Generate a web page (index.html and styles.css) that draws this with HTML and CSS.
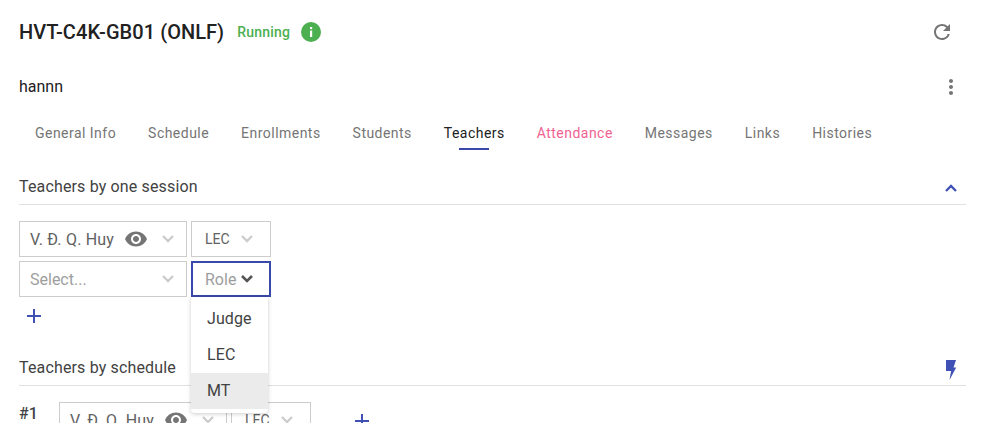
FILE: index.html

```html
<!DOCTYPE html>
<html lang="en">
<head>
    <meta charset="UTF-8">
    <meta name="viewport" content="width=device-width, initial-scale=1.0">
    <title>HVT-C4K-GB01 (ONLF)</title>
    <link rel="stylesheet" href="styles.css">
</head>
<body>
    <div class="page">
        <div class="title-row">
            <h1 class="title">HVT-C4K-GB01 (ONLF)</h1>
            <span class="status">Running</span>
            <span class="info-dot">
                <svg viewBox="0 0 20 20" width="20" height="20"><circle cx="10" cy="10" r="10" fill="#4caf50"/><rect x="9" y="5" width="2.2" height="2.2" fill="#fff"/><rect x="9" y="8.6" width="2.2" height="6.4" fill="#fff"/></svg>
            </span>
            <svg class="refresh" viewBox="0 0 24 24" width="24" height="24"><path fill="#757575" d="M17.65 6.35A7.958 7.958 0 0 0 12 4c-4.42 0-7.99 3.58-7.99 8s3.57 8 7.99 8c3.73 0 6.84-2.55 7.73-6h-2.08A5.99 5.99 0 0 1 12 18c-3.31 0-6-2.69-6-6s2.69-6 6-6c1.66 0 3.14.69 4.22 1.78L13 11h7V4l-2.35 2.35z"/></svg>
        </div>

        <div class="owner-row">
            <span class="owner">hannn</span>
            <svg class="more" viewBox="0 0 24 24" width="24" height="24"><path fill="#757575" d="M12 8c1.1 0 2-.9 2-2s-.9-2-2-2-2 .9-2 2 .9 2 2 2zm0 2c-1.1 0-2 .9-2 2s.9 2 2 2 2-.9 2-2-.9-2-2-2zm0 6c-1.1 0-2 .9-2 2s.9 2 2 2 2-.9 2-2-.9-2-2-2z"/></svg>
        </div>

        <div class="tabs">
            <a class="tab">General Info</a>
            <a class="tab">Schedule</a>
            <a class="tab">Enrollments</a>
            <a class="tab">Students</a>
            <a class="tab active">Teachers</a>
            <a class="tab pink">Attendance</a>
            <a class="tab">Messages</a>
            <a class="tab">Links</a>
            <a class="tab">Histories</a>
        </div>

        <div class="section-head first">
            <span>Teachers by one session</span>
            <svg class="collapse" viewBox="0 0 14 10" width="14" height="10"><path fill="none" stroke="#3f51b5" stroke-width="2.3" d="M2 8l5-5 5 5"/></svg>
        </div>

        <div class="select-rows">
            <div class="select-row">
                <div class="select teacher">
                    <span class="value">V. Đ. Q. Huy</span>
                    <svg class="eye" viewBox="0 0 24 24" width="24" height="24"><path fill="#757575" d="M12 4.5C7 4.5 2.73 7.61 1 12c1.73 4.39 6 7.5 11 7.5s9.27-3.11 11-7.5c-1.73-4.39-6-7.5-11-7.5zM12 17c-2.76 0-5-2.24-5-5s2.24-5 5-5 5 2.24 5 5-2.24 5-5 5zm0-8c-1.66 0-3 1.34-3 3s1.34 3 3 3 3-1.34 3-3-1.34-3-3-3z"/></svg>
                    <svg class="chev" viewBox="0 0 14 10" width="14" height="10"><path fill="none" stroke="#ccc" stroke-width="2.3" d="M2 2l5 5 5-5"/></svg>
                </div>
                <div class="select role">
                    <span class="value small">LEC</span>
                    <svg class="chev" viewBox="0 0 14 10" width="14" height="10"><path fill="none" stroke="#ccc" stroke-width="2.3" d="M2 2l5 5 5-5"/></svg>
                </div>
            </div>
            <div class="select-row">
                <div class="select teacher">
                    <span class="placeholder">Select...</span>
                    <svg class="chev" viewBox="0 0 14 10" width="14" height="10"><path fill="none" stroke="#ccc" stroke-width="2.3" d="M2 2l5 5 5-5"/></svg>
                </div>
                <div class="role-wrap">
                    <div class="select role focused">
                        <span class="placeholder">Role</span>
                        <svg class="chev" viewBox="0 0 14 10" width="14" height="10"><path fill="none" stroke="#555" stroke-width="2.6" d="M2 2l5 5 5-5"/></svg>
                    </div>
                    <div class="menu">
                        <div class="menu-item">Judge</div>
                        <div class="menu-item">LEC</div>
                        <div class="menu-item hover">MT</div>
                    </div>
                </div>
            </div>
        </div>

        <svg class="plus" viewBox="0 0 16 16" width="16" height="16"><path fill="#3f51b5" d="M7 1h2v6h6v2H9v6H7V9H1V7h6z"/></svg>

        <div class="section-head second">
            <span>Teachers by schedule</span>
            <svg class="bolt" viewBox="0 0 12 20" width="12" height="20"><path fill="#3f51b5" d="M0 0h10L7.5 7.5h2.7L3.5 20l1.6-9H0z"/></svg>
        </div>

        <div class="schedule-row">
            <span class="num">#1</span>
            <div class="select teacher">
                <span class="value">V. Đ. Q. Huy</span>
                <svg class="eye" viewBox="0 0 24 24" width="24" height="24"><path fill="#757575" d="M12 4.5C7 4.5 2.73 7.61 1 12c1.73 4.39 6 7.5 11 7.5s9.27-3.11 11-7.5c-1.73-4.39-6-7.5-11-7.5zM12 17c-2.76 0-5-2.24-5-5s2.24-5 5-5 5 2.24 5 5-2.24 5-5 5zm0-8c-1.66 0-3 1.34-3 3s1.34 3 3 3 3-1.34 3-3-1.34-3-3-3z"/></svg>
                <svg class="chev" viewBox="0 0 14 10" width="14" height="10"><path fill="none" stroke="#ccc" stroke-width="2.3" d="M2 2l5 5 5-5"/></svg>
            </div>
            <div class="select role">
                <span class="value small">LEC</span>
                <svg class="chev" viewBox="0 0 14 10" width="14" height="10"><path fill="none" stroke="#ccc" stroke-width="2.3" d="M2 2l5 5 5-5"/></svg>
            </div>
            <svg class="plus-inline" viewBox="0 0 16 16" width="16" height="16"><path fill="#3f51b5" d="M7 1h2v6h6v2H9v6H7V9H1V7h6z"/></svg>
        </div>
    </div>
</body>
</html>
```

FILE: styles.css

```css
html, body {
    margin: 0;
    padding: 0;
    height: 100%;
    overflow: hidden;
    background-color: #fff;
}
body {
    font-family: Roboto, Arial, sans-serif;
    color: #212121;
}
.page {
    padding: 0 16px 0 19px;
}
.title-row {
    display: flex;
    align-items: center;
    height: 32px;
    padding-top: 16px;
}
.title {
    margin: 0;
    font-size: 20px;
    font-weight: 500;
    letter-spacing: 0.05px;
    color: #212121;
}
.status {
    margin-left: 13px;
    font-size: 14px;
    font-weight: 500;
    letter-spacing: 0.2px;
    color: #4caf50;
}
.info-dot {
    display: flex;
    margin-left: 11px;
}
.refresh {
    margin-left: auto;
    margin-right: 12px;
}
.owner-row {
    display: flex;
    align-items: center;
    justify-content: space-between;
    height: 24px;
    margin-top: 27px;
    font-size: 16px;
}
.owner {
    margin-bottom: 2px;
}
.more {
    margin-right: 3px;
}
.tabs {
    display: flex;
    height: 37px;
    margin-top: 14px;
}
.tab {
    position: relative;
    padding: 0 16px;
    font-size: 14px;
    letter-spacing: 0.47px;
    line-height: 40px;
    color: #757575;
}
.tab.active {
    color: #212121;
}
.tab.active::after {
    content: "";
    position: absolute;
    left: 50%;
    bottom: 0;
    width: 30px;
    height: 2px;
    margin-left: -15px;
    background-color: #3949ab;
}
.tab.pink {
    color: #f06292;
}
.section-head {
    display: flex;
    align-items: center;
    justify-content: space-between;
    height: 32px;
    padding-top: 3px;
    padding-bottom: 2px;
    padding-right: 8px;
    border-bottom: 1px solid #e0e0e0;
    font-size: 16px;
    font-weight: 400;
    letter-spacing: 0.15px;
    color: #424242;
}
.section-head.first {
    margin-top: 17px;
}
.section-head.second {
    margin-top: 24px;
}
.collapse {
    margin-top: 4px;
}
.bolt {
    margin-top: 6px;
}
.select-rows {
    display: flex;
    flex-direction: column;
    gap: 4px;
    margin-top: 16px;
}
.select-row {
    display: flex;
    gap: 4px;
}
.select {
    display: flex;
    align-items: center;
    box-sizing: border-box;
    height: 36px;
    padding-left: 10px;
    border: 1px solid #ccc;
    background-color: #fff;
}
.teacher {
    width: 168px;
}
.role {
    width: 80px;
    padding-left: 13px;
}
.role-wrap {
    position: relative;
}
.value {
    font-size: 16px;
    letter-spacing: 0.2px;
    color: #616161;
}
.value.small {
    font-size: 14px;
    letter-spacing: 0;
}
.placeholder {
    font-size: 16px;
    color: #9e9e9e;
}
.eye {
    margin-left: 10px;
}
.chev {
    margin-left: auto;
    margin-right: 11px;
}
.role .chev {
    margin-right: 16px;
}
.focused {
    border: 2px solid #3949ab;
    padding-left: 12px;
}
.focused .chev {
    margin-right: 15px;
}
.menu {
    position: absolute;
    top: 36px;
    left: 0;
    width: 77px;
    padding-top: 4px;
    padding-bottom: 4px;
    border-radius: 0 0 4px 4px;
    background-color: #fff;
    box-shadow: 0 1px 4px rgba(0, 0, 0, 0.2);
    z-index: 2;
}
.menu-item {
    height: 36px;
    padding-left: 16px;
    font-size: 16px;
    letter-spacing: 0.1px;
    line-height: 36px;
    color: #424242;
}
.menu-item.hover {
    background-color: #ebebeb;
}
.plus {
    display: block;
    margin: 11px 0 0 7px;
}
.schedule-row {
    display: flex;
    align-items: flex-start;
    margin-top: 16px;
}
.num {
    width: 40px;
    font-size: 16px;
    font-weight: 500;
    line-height: 24px;
    color: #424242;
}
.schedule-row .role {
    margin-left: 4px;
}
.plus-inline {
    margin: 11px 0 0 43px;
}
```
